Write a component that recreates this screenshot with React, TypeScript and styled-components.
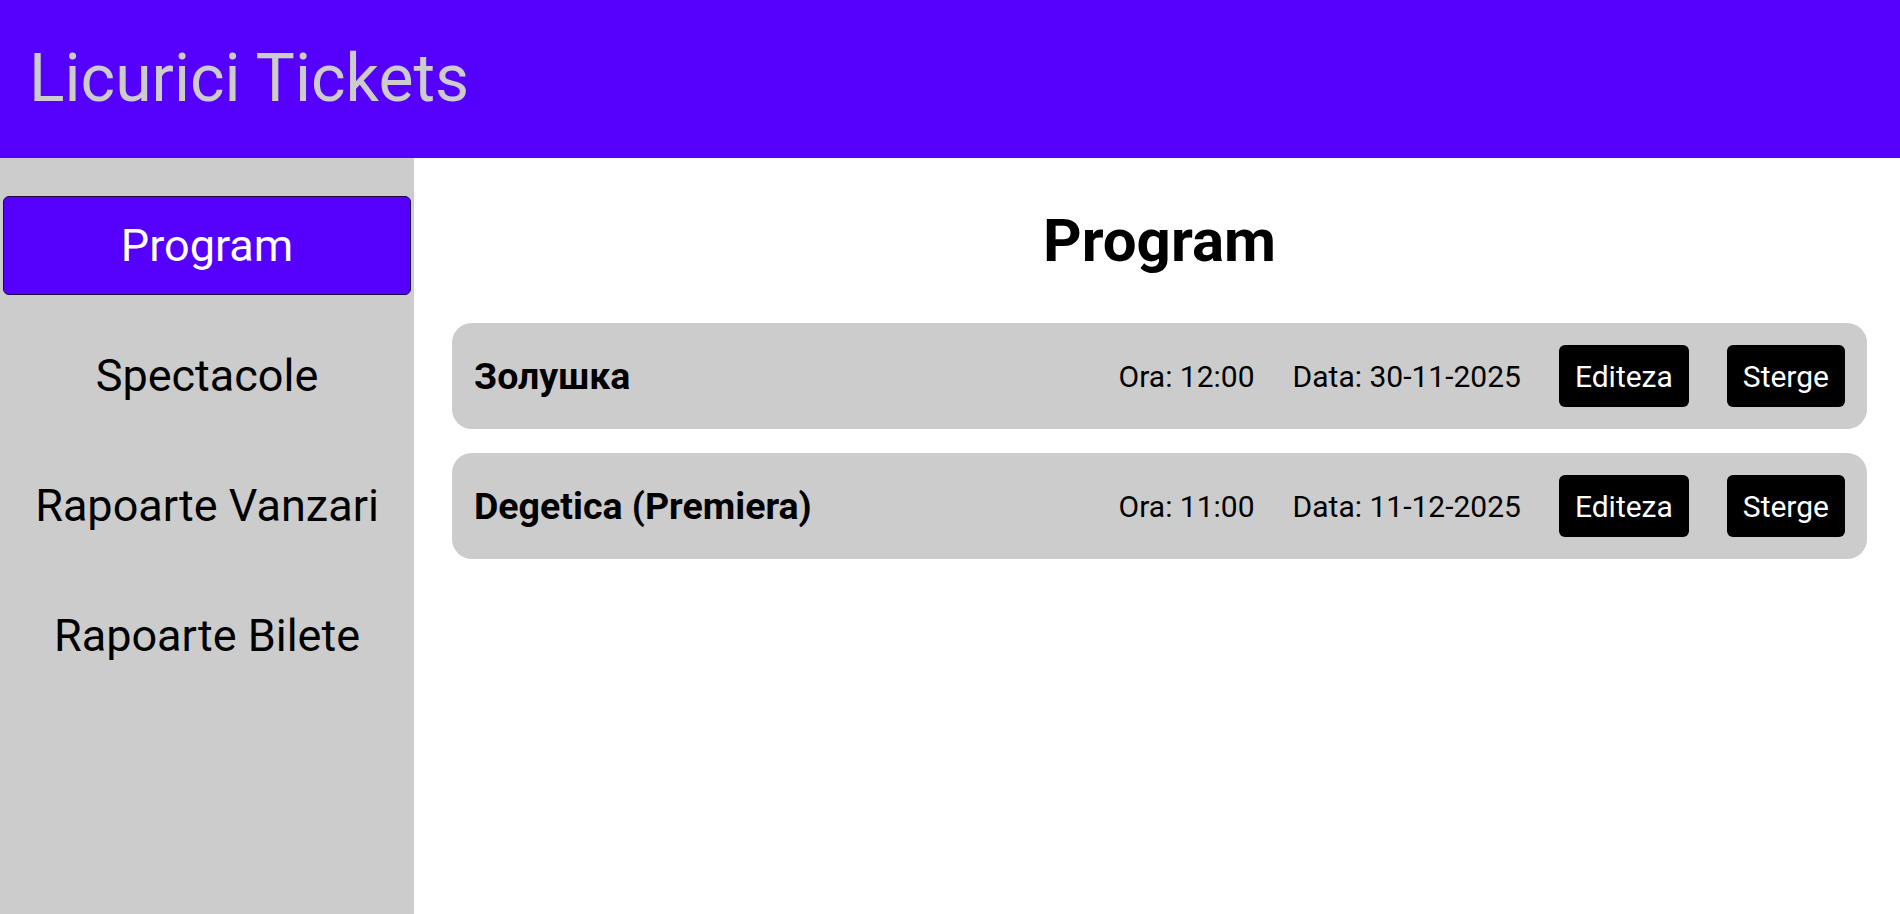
import styled, { createGlobalStyle } from 'styled-components';

const GlobalStyle = createGlobalStyle`
	html, body {
		margin: 0;
		padding: 0;
		height: 100%;
	}
	body {
		font-family: Roboto, 'Liberation Sans', sans-serif;
		background: #ffffff;
	}
	#root {
		height: 100%;
	}
`;

const NAV_ITEMS = ['Program', 'Spectacole', 'Rapoarte Vanzari', 'Rapoarte Bilete'];

const SHOWS = [
	{ id: 1, title: 'Золушка', time: '12:00', date: '30-11-2025' },
	{ id: 2, title: 'Degetica (Premiera)', time: '11:00', date: '11-12-2025' },
];

const App = () => {
	return (
		<>
			<GlobalStyle />
			<Page>
				<Header>
					<Title>Licurici Tickets</Title>
				</Header>
				<Body>
					<Sidebar>
						{NAV_ITEMS.map((item) => (
							<NavItem key={item} $active={item === 'Program'}>
								{item}
							</NavItem>
						))}
					</Sidebar>
					<Main>
						<Heading>Program</Heading>
						<List>
							{SHOWS.map((show) => (
								<Card key={show.id}>
									<ShowTitle>{show.title}</ShowTitle>
									<Info>Ora: {show.time}</Info>
									<Info>Data: {show.date}</Info>
									<ActionButton>Editeza</ActionButton>
									<ActionButton>Sterge</ActionButton>
								</Card>
							))}
						</List>
					</Main>
				</Body>
			</Page>
		</>
	);
};

const Page = styled.div`
	display: flex;
	flex-direction: column;
	height: 100vh;
	overflow: hidden;
`;

const Header = styled.header`
	height: 158px;
	flex-shrink: 0;
	background: #5500ff;
	display: flex;
	align-items: center;
	padding-left: 29px;
`;

const Title = styled.h1`
	margin: 0;
	font-size: 66px;
	font-weight: 400;
	color: #cccccc;
	line-height: 1;
`;

const Body = styled.div`
	flex: 1;
	display: flex;
	min-height: 0;
`;

const Sidebar = styled.nav`
	width: 414px;
	flex-shrink: 0;
	background: #cccccc;
	box-sizing: border-box;
	padding: 38px 3px;
	display: flex;
	flex-direction: column;
	gap: 31px;
`;

const NavItem = styled.div<{ $active?: boolean }>`
	height: 99px;
	box-sizing: border-box;
	display: flex;
	align-items: center;
	justify-content: center;
	font-size: 45px;
	color: ${(p) => (p.$active ? '#ffffff' : '#000000')};
	background: ${(p) => (p.$active ? '#5500ff' : 'transparent')};
	border: 1px solid ${(p) => (p.$active ? '#1a0a40' : 'transparent')};
	border-radius: 6px;
	cursor: pointer;
`;

const Main = styled.main`
	flex: 1;
	box-sizing: border-box;
	padding: 48px 33px 0 38px;
`;

const Heading = styled.h2`
	margin: 0 0 47px;
	text-align: center;
	font-size: 60px;
	font-weight: 700;
	line-height: 70px;
	color: #000000;
`;

const List = styled.div`
	display: flex;
	flex-direction: column;
	gap: 24px;
`;

const Card = styled.div`
	display: flex;
	align-items: center;
	gap: 38px;
	background: #cccccc;
	border-radius: 20px;
	padding: 22px 22px 22px 22px;
`;

const ShowTitle = styled.span`
	flex: 1;
	font-size: 37.5px;
	font-weight: 700;
	color: #000000;
`;

const Info = styled.span`
	font-size: 30px;
	color: #000000;
`;

const ActionButton = styled.button`
	height: 62px;
	padding: 0 16px;
	border: none;
	border-radius: 6px;
	background: #000000;
	color: #ffffff;
	font-family: Roboto, 'Liberation Sans', sans-serif;
	font-size: 30px;
	cursor: pointer;
`;

export default App;
